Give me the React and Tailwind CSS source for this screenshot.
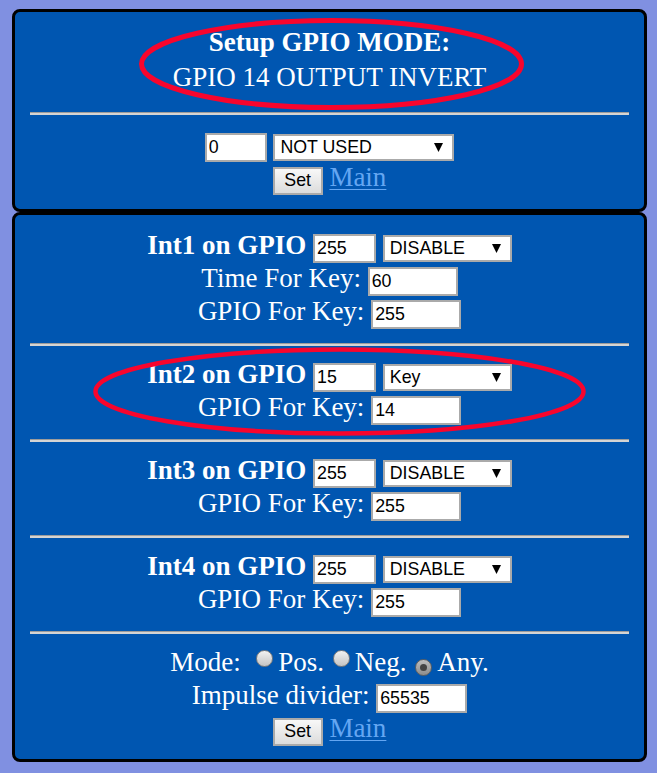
import React from 'react';

// little form controls, sized like the scaled-up device page
function Field({ value, className = '' }) {
  return (
    <input
      readOnly
      value={value}
      className={`inline-block h-[29px] border-2 border-[#aaaaaa] bg-white px-[2px] align-baseline font-['Liberation_Sans'] text-[17.8px] text-black outline-none ${className}`}
    />
  );
}

// drop-down look: label on the left, solid arrow on the right
function Pick({ label, className = '' }) {
  return (
    <span
      className={`inline-flex h-[27px] items-center justify-between border-2 border-[#aaaaaa] bg-white pl-[5px] pr-[9px] align-baseline font-['Liberation_Sans'] text-[17.8px] leading-none text-black ${className}`}
    >
      <span>{label}</span>
      <svg width="9" height="9" viewBox="0 0 9 9">
        <polygon points="0,0 9,0 4.5,9" fill="#000" />
      </svg>
    </span>
  );
}

function SetButton() {
  return (
    <button className="inline-flex h-[28px] w-[50px] items-center justify-center border-2 border-[#aaaaaa] bg-linear-to-b from-[#f8f8f8] to-[#dcdcdc] align-baseline font-['Liberation_Sans'] text-[17.8px] leading-none text-black">
      Set
    </button>
  );
}

function MainLink() {
  return (
    <a href="#" className="text-[#64a6f2] underline decoration-1 underline-offset-[3px]">
      Main
    </a>
  );
}

function Radio({ checked }) {
  return (
    <span
      className={`mb-[4px] ml-[2px] mr-[5px] inline-flex h-[17px] w-[17px] shrink-0 items-center justify-center rounded-full border align-baseline ${
        checked
          ? 'border-[#5f5f5f] bg-linear-to-b from-[#bdbdbd] to-[#8d8d8d]'
          : 'border-[#7c7c7c] bg-linear-to-b from-[#f2f2f2] to-[#c4c4c4]'
      }`}
    >
      {checked && <span className="h-[7px] w-[7px] rounded-full bg-[#444]" />}
    </span>
  );
}

function Rule() {
  return <div className="mb-[12px] mt-[15px] h-[3px] border-t border-[#9c9c9c] bg-[#d4d4d4]" />;
}

function Row({ children }) {
  return <div className="h-[33px] whitespace-nowrap leading-[33px]">{children}</div>;
}

const ints = [
  { name: 'Int1', gpio: '255', mode: 'DISABLE', time: '60', key: '255' },
  { name: 'Int2', gpio: '15', mode: 'Key', key: '14' },
  { name: 'Int3', gpio: '255', mode: 'DISABLE', key: '255' },
  { name: 'Int4', gpio: '255', mode: 'DISABLE', key: '255' },
];

export default function App() {
  return (
    <div className="relative min-h-[773px] bg-[#8090e1] pl-[12px] pr-[10px] pt-[9px] font-['Liberation_Serif'] text-[27px] text-white">
      {/* Mode setup */}
      <section className="rounded-lg border-[3px] border-black bg-[#0056b1] px-[15px] pb-[15px] pt-[13px] text-center">
        <div className="h-[35px] font-bold leading-[35px]">Setup GPIO MODE:</div>
        <div className="h-[35px] leading-[35px]">GPIO 14 OUTPUT INVERT</div>
        <div className="mb-[13px] mt-[17px] h-[3px] border-t border-[#9c9c9c] bg-[#d4d4d4]" />
        <Row>
          <Field value="0" className="w-[62px]" /> <Pick label="NOT USED" className="w-[181px]" />
        </Row>
        <Row>
          <SetButton /> <MainLink />
        </Row>
      </section>

      {/* Interrupt inputs */}
      <section className="rounded-lg border-[3px] border-black bg-[#0056b1] px-[15px] pb-[14px] pt-[14px] text-center">
        {ints.map((it, i) => (
          <div key={it.name}>
            {i > 0 && <Rule />}
            <Row>
              <b>{it.name} on GPIO</b> <Field value={it.gpio} className="w-[63px]" />{' '}
              <Pick label={it.mode} className="w-[129px]" />
            </Row>
            {it.time && (
              <Row>
                Time For Key: <Field value={it.time} className="w-[90px]" />
              </Row>
            )}
            <Row>
              GPIO For Key: <Field value={it.key} className="w-[90px]" />
            </Row>
          </div>
        ))}
        <Rule />
        <Row>
          Mode:&nbsp; <Radio />
          Pos. <Radio />
          Neg. <Radio checked />
          Any.
        </Row>
        <Row>
          Impulse divider: <Field value="65535" className="w-[91px]" />
        </Row>
        <Row>
          <SetButton /> <MainLink />
        </Row>
      </section>

      {/* red marker rings drawn over the page */}
      <svg className="pointer-events-none absolute left-0 top-0" width="657" height="773">
        <ellipse cx="331.5" cy="64" rx="190" ry="43.5" fill="none" stroke="#f8052d" strokeWidth="5" />
        <ellipse cx="339.5" cy="391.5" rx="244" ry="42" fill="none" stroke="#f8052d" strokeWidth="4.5" />
      </svg>
    </div>
  );
}
